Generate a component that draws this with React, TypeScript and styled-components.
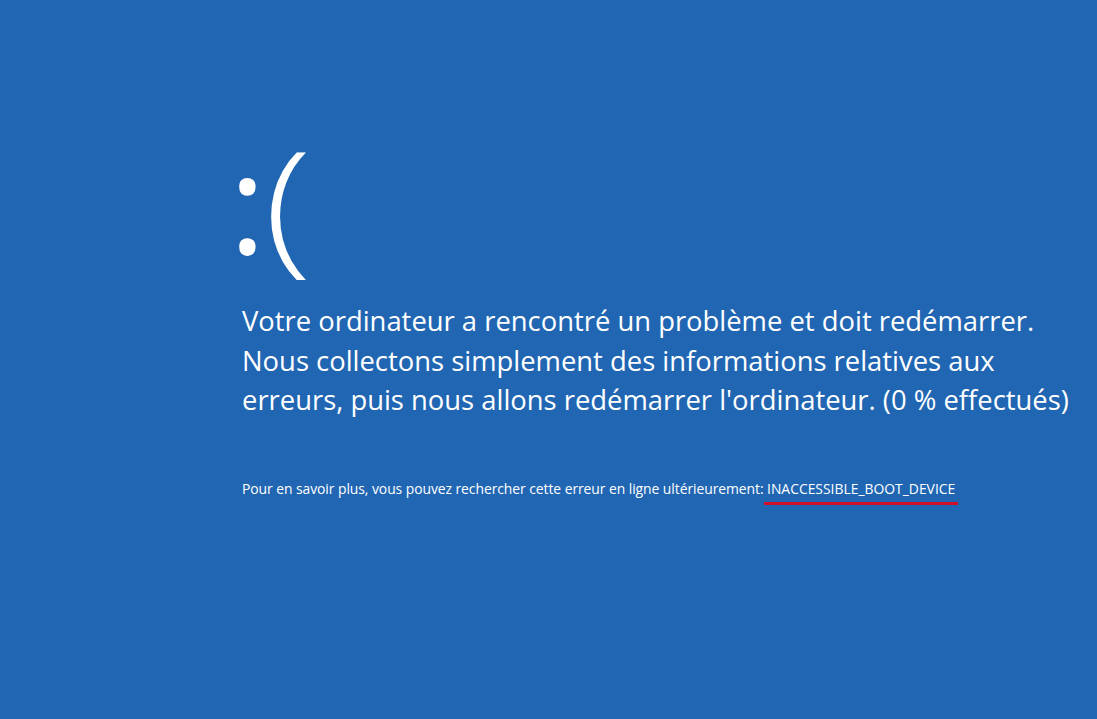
import { FC } from "react"
import styled, { createGlobalStyle } from "styled-components"

const GlobalStyle = createGlobalStyle`
  html, body {
    margin: 0;
    padding: 0;
    background: #2166b3;
  }
`

const Screen = styled.div`
  width: 1097px;
  height: 719px;
  background: #2166b3;
  color: #ffffff;
  font-family: "Open Sans", "Noto Sans", sans-serif;
  box-sizing: border-box;
  padding: 128px 0 0 242px;
  overflow: hidden;
`

const Face = styled.div`
  display: flex;
  align-items: baseline;
  margin-left: -13px;
  height: 173px;
  font-weight: 300;
  line-height: 1;
`

const Colon = styled.span`
  display: inline-block;
  font-size: 140px;
  font-weight: 400;
  transform: translateY(-3px);
`

const Paren = styled.span`
  display: inline-block;
  font-size: 146px;
  margin-left: 2px;
  transform: scaleX(1.2);
`

const Message = styled.p`
  margin: 0;
  font-weight: 400;
  font-size: 27.4px;
  line-height: 39.5px;
`

const Details = styled.p`
  margin: 59px 0 0;
  font-size: 13.9px;
  line-height: 20px;
  letter-spacing: -0.06px;
`

const StopCode = styled.span`
  display: inline-block;
  border-bottom: 3px solid #d0102a;
  padding: 0 3px 3px 3px;
  margin-left: -3px;
  letter-spacing: 0;
`

const App: FC = () => (
  <>
    <GlobalStyle />
    <Screen>
      <Face>
        <Colon>:</Colon>
        <Paren>(</Paren>
      </Face>
      <Message>
        Votre ordinateur a rencontré un problème et doit redémarrer.
        <br />
        Nous collectons simplement des informations relatives aux
        <br />
        erreurs, puis nous allons redémarrer l'ordinateur. (0 % effectués)
      </Message>
      <Details>
        Pour en savoir plus, vous pouvez rechercher cette erreur en ligne
        ultérieurement: <StopCode>INACCESSIBLE_BOOT_DEVICE</StopCode>
      </Details>
    </Screen>
  </>
)

export default App
